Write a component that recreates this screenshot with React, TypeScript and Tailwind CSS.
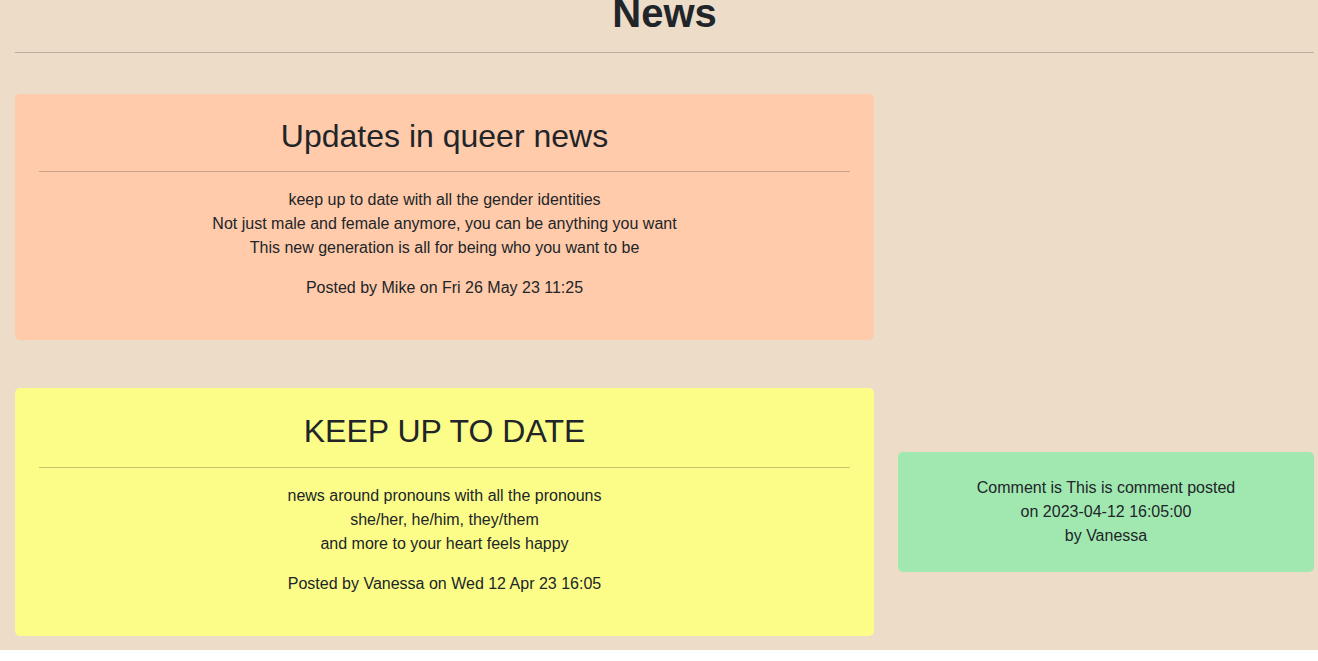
const POSTS = [
  {
    id: 1,
    title: "Updates in queer news",
    lines: [
      "keep up to date with all the gender identities",
      "Not just male and female anymore, you can be anything you want",
      "This new generation is all for being who you want to be",
    ],
    posted: "Posted by Mike on Fri 26 May 23 11:25",
    card: "bg-[#ffcbaa] pt-[23px]",
    comments: [] as string[][],
  },
  {
    id: 2,
    title: "KEEP UP TO DATE",
    lines: [
      "news around pronouns with all the pronouns",
      "she/her, he/him, they/them",
      "and more to your heart feels happy",
    ],
    posted: "Posted by Vanessa on Wed 12 Apr 23 16:05",
    card: "bg-[#fbfd88] pt-6",
    comments: [["Comment is This is comment posted", "on 2023-04-12 16:05:00", "by Vanessa"]],
  },
];

function PostCard({ post }: { post: (typeof POSTS)[number] }) {
  return (
    <div className={`${post.card} rounded-[5px] px-6 pb-6 text-center`}>
      <h2 className="text-[32px] leading-[1.2]">{post.title}</h2>
      <hr className="mt-4 mb-4 border-0 border-t border-[#212529]/25" />
      <p className="text-base leading-6">
        {post.lines.map((l) => (
          <span key={l} className="block">
            {l}
          </span>
        ))}
      </p>
      <p className="mt-4 mb-4 text-base leading-6">{post.posted}</p>
    </div>
  );
}

export default function App() {
  return (
    <div
      className="min-h-screen bg-[#ecdcc8] pl-[15px] pr-[4px] text-[#212529]"
      style={{ fontFamily: '"Liberation Sans", Arial, sans-serif' }}
    >
      <h1 className="mt-[-11px] text-center text-[40px] font-bold leading-[1.2]">News</h1>
      <hr className="mt-[15px] border-0 border-t border-[#212529]/25" />

      <div className="mt-[41px] flex flex-col gap-12">
        {POSTS.map((post) => (
          <div key={post.id} className="grid grid-cols-[859px_1fr] items-center gap-x-6">
            <PostCard post={post} />
            <div className="flex flex-col gap-4">
              {post.comments.map((c, i) => (
                <div key={i} className="rounded-[5px] bg-[#a0e8b0] p-6 text-center text-base leading-6">
                  {c.map((l) => (
                    <div key={l}>{l}</div>
                  ))}
                </div>
              ))}
            </div>
          </div>
        ))}
      </div>
    </div>
  );
}
